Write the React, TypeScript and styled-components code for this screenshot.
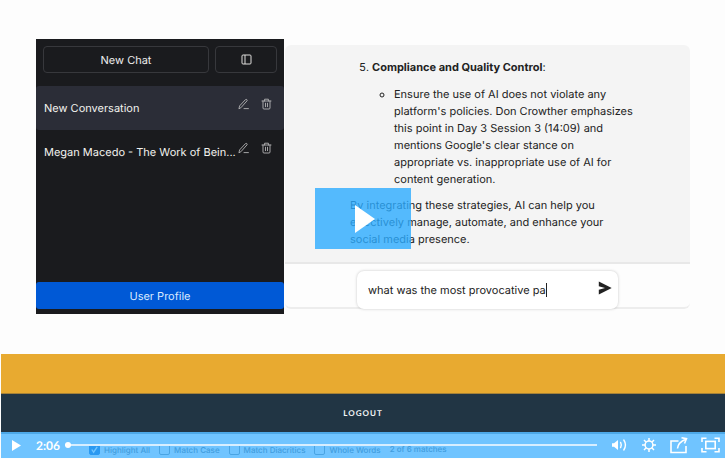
import React, { useState } from "react";
import styled, { createGlobalStyle } from "styled-components";

const GlobalStyle = createGlobalStyle`
  *, *::before, *::after { box-sizing: border-box; }
  body {
    margin: 0;
    background: #fdfdfd;
    font-family: Inter, "Liberation Sans", sans-serif;
    font-size: 11px;
    text-rendering: geometricPrecision;
    color: #222;
  }
  button, input { font: inherit; color: inherit; text-rendering: inherit; }
`;

const Player = styled.div`
  position: relative;
  padding: 0 0 1px 1px;
  background: #fdfdfd;
`;

const Page = styled.main`
  display: flex;
  align-items: flex-start;
  padding: 39px 35px 40px;
`;

const Sidebar = styled.aside`
  display: flex;
  flex-direction: column;
  flex: 0 0 248px;
  min-width: 0;
  height: 275px;
  padding-bottom: 5px;
  background: #1a1b1e;
  color: #ececec;
`;

const SidebarHeader = styled.div`
  display: flex;
  gap: 6px;
  padding: 7px 7px 13px;
`;

const OutlineButton = styled.button<{ $grow?: boolean }>`
  display: flex;
  align-items: center;
  justify-content: center;
  flex: ${(p) => (p.$grow ? "1" : "0 0 62px")};
  height: 27px;
  padding: 0;
  border: 1px solid #37383c;
  border-radius: 4px;
  background: transparent;
`;

const ConversationList = styled.ul`
  flex: 1;
  margin: 0;
  padding: 0;
  list-style: none;
`;

const Conversation = styled.li<{ $active?: boolean }>`
  display: flex;
  align-items: center;
  height: 44px;
  padding: 0 12px 0 8px;
  border-radius: 3px;
  background: ${(p) => (p.$active ? "#2b2d37" : "transparent")};
`;

const ConversationLink = styled.a`
  flex: 1;
  white-space: nowrap;
  color: #f2f2ee;
  text-decoration: none;
`;

const RowActions = styled.div`
  display: flex;
  align-items: center;
  gap: 12px;
  padding-bottom: 8px;
`;

const IconButton = styled.button`
  display: flex;
  padding: 0;
  border: 0;
  background: none;
  color: #b4b4b6;
`;

const ProfileButton = styled.button`
  height: 27px;
  border: 0;
  border-radius: 3px;
  background: #0059d6;
  color: #dcebff;
`;

const Chat = styled.section`
  display: flex;
  flex-direction: column;
  flex: 1;
  min-width: 0;
  margin: 6px 0 0 1px;
  border-bottom: 2px solid #ededed;
  border-radius: 6px;
`;

const Messages = styled.div`
  padding: 14px 10px 14px 20px;
  border-bottom: 2px solid #e8e8e8;
  border-radius: 6px 6px 0 0;
  background: #f4f4f4;
  line-height: 17px;
`;

const Message = styled.article`
  max-width: 285px;
  margin: 0 auto;
`;

const Points = styled.ol`
  margin: 0 0 9px;
  padding-left: 22px;
`;

const SubPoints = styled.ul`
  margin: 10px 0 0;
  padding-left: 22px;
  list-style: circle;
`;

const Paragraph = styled.p`
  margin: 0;
`;

const Composer = styled.form`
  display: flex;
  align-items: center;
  width: 261px;
  height: 38px;
  margin: 7px auto -2px;
  padding: 0 6px 0 11px;
  border-radius: 7px;
  background: #fff;
  box-shadow: 0 0 3px rgba(0, 0, 0, 0.22);
`;

const Prompt = styled.input`
  field-sizing: content;
  max-width: 215px;
  height: 14px;
  margin-right: auto;
  padding: 0;
  border: 0;
  border-right: 1px solid #222;
  outline: 0;
  background: none;
`;

const SendButton = styled(IconButton)`
  margin-bottom: 5px;
  color: #222;
`;

const GoldBand = styled.div`
  height: 40px;
  background: #e8aa30;
  border-bottom: 1px solid #a58138;
`;

const Footer = styled.footer`
  display: flex;
  align-items: center;
  justify-content: center;
  height: 38px;
  background: #213544;
`;

const FooterLink = styled.a`
  color: #f4f6f8;
  font-family: Lato, sans-serif;
  font-size: 8px;
  font-weight: 700;
  letter-spacing: 1px;
  text-decoration: none;
`;

const FindBar = styled.div`
  display: flex;
  align-items: flex-end;
  gap: 9px;
  height: 26px;
  padding: 0 0 3px 88px;
  border-top: 2px solid #8aa0b0;
  background: #fdfdfd;
  color: #657c8c;
  font-size: 8px;
  font-weight: 500;
`;

const FindOption = styled.label`
  display: flex;
  align-items: center;
  gap: 4px;
  white-space: nowrap;
`;

const FindCheck = styled.input`
  appearance: none;
  width: 11px;
  height: 11px;
  margin: 0;
  border: 1px solid #7f93a2;
  border-radius: 2px;
  &:checked {
    border-color: #1470d0;
    background: #1470d0 url("data:image/svg+xml,%3Csvg xmlns='http://www.w3.org/2000/svg' viewBox='0 0 10 10'%3E%3Cpath d='M2 5l2 3 4-6' fill='none' stroke='white' stroke-width='1.5'/%3E%3C/svg%3E");
  }
`;

const FindCount = styled.span`
  line-height: 11px;
`;

const PlayLayer = styled.div`
  position: absolute;
  inset: 0 0 22px;
  display: grid;
  place-items: center;
  pointer-events: none;
`;

const BigPlay = styled.button`
  display: grid;
  place-items: center;
  width: 96px;
  height: 61px;
  padding: 0 0 0 5px;
  border: 0;
  background: rgba(44, 171, 255, 0.8);
  pointer-events: auto;
`;

const Controls = styled.div`
  position: absolute;
  inset: auto 0 1px 1px;
  display: flex;
  align-items: center;
  height: 26px;
  padding: 0 5px 0 11px;
  background: rgba(51, 171, 255, 0.7);
  color: #fff;
`;

const ControlButton = styled(IconButton)`
  color: #fff;
`;

const Time = styled.time`
  margin: 0 5px 0 15px;
  font-family: Lato, sans-serif;
  font-size: 12px;
  font-weight: 700;
`;

const Seek = styled.input`
  appearance: none;
  flex: 1;
  min-width: 0;
  height: 6px;
  margin: 0 14px 0 0;
  background: linear-gradient(#d7eeff, #d7eeff) center / 100% 2px no-repeat;
  &::-webkit-slider-thumb {
    appearance: none;
    width: 6px;
    height: 6px;
    border-radius: 50%;
    background: #fff;
  }
`;

const ControlGroup = styled.div`
  display: flex;
  align-items: center;
  gap: 13px;
`;

const PanelIcon = () => (
  <svg width="11" height="11" viewBox="0 0 11 11" fill="none" stroke="#dededb">
    <rect x="1" y="1" width="9" height="9" rx="1" />
    <path d="M4 1v9" />
  </svg>
);

const PencilIcon = () => (
  <svg width="11" height="12" viewBox="0 0 11 12" fill="none" stroke="currentColor" strokeWidth=".9" strokeLinejoin="round" strokeLinecap="round">
    <path d="M1 10.4l.6-2.5 5.8-6.2c.4-.5 1-.5 1.4-.1.5.4.5 1 .1 1.4L3.1 9.5z M6 10.6h4.4" />
  </svg>
);

const TrashIcon = () => (
  <svg width="11" height="12" viewBox="0 0 11 12" fill="none" stroke="currentColor" strokeWidth=".9" strokeLinejoin="round" strokeLinecap="round">
    <path d="M1 3h9 M3.6 3V1.2h3.8V3 M2 3v7q0 1 1 1h5q1 0 1-1V3 M4.5 5.2v3.5 M6.5 5.2v3.5" />
  </svg>
);

const SendIcon = () => (
  <svg width="14" height="14" viewBox="0 0 14 14" fill="currentColor">
    <path d="M.8.4L13.7 7 .8 13.6V8.7L7 7 .8 5.3z" />
  </svg>
);

const TriangleIcon = ({ width, height }: { width: number; height: number }) => (
  <svg width={width} height={height} viewBox="0 0 20 28" preserveAspectRatio="none" fill="#fff">
    <path d="M0 0l20 14L0 28z" />
  </svg>
);

const VolumeIcon = () => (
  <svg width="17" height="14" viewBox="0 0 17 14" fill="none" stroke="currentColor" strokeWidth="1.4" strokeLinecap="round">
    <path d="M1 5.2h2L7 2v10L3 8.8H1z" fill="currentColor" stroke="none" />
    <path d="M9.6 4.4q1.4 2.6 0 5.2 M12.8 2q3.3 5 0 10" />
  </svg>
);

const GearIcon = () => (
  <svg width="16" height="16" viewBox="0 0 16 16" fill="none" stroke="currentColor" strokeWidth="1.5">
    <circle cx="8" cy="8" r="3.9" />
    <path d="M8 1v3 M8 12v3 M1 8h3 M12 8h3 M3 3l2.2 2.2 M10.8 10.8L13 13 M13 3l-2.2 2.2 M5.2 10.8L3 13" />
  </svg>
);

const ShareIcon = () => (
  <svg width="18" height="18" viewBox="0 0 18 18" fill="none" stroke="currentColor" strokeWidth="1.6">
    <path d="M8.5 5H1v11.5h15V10" />
    <path d="M7.5 12.5q.5-6 8-9.3 M11.5 1.7l5 1-2 4.8" />
  </svg>
);

const FullscreenIcon = () => (
  <svg width="19" height="16" viewBox="0 0 19 16" fill="none" stroke="currentColor" strokeWidth="1.6">
    <path d="M1 5V1.2h4.5 M13.5 1.2H18V5 M18 11v3.8h-4.5 M5.5 14.8H1V11" />
    <rect x="4.8" y="4.4" width="9.4" height="7.2" />
  </svg>
);

const conversations = ["New Conversation", "Megan Macedo - The Work of Bein..."];
const findOptions = ["Highlight All", "Match Case", "Match Diacritics", "Whole Words"];

export default function App() {
  const [prompt, setPrompt] = useState("what was the most provocative pa");

  return (
    <>
      <GlobalStyle />
      <Player>
        <Page>
          <Sidebar>
            <SidebarHeader>
              <OutlineButton $grow>New Chat</OutlineButton>
              <OutlineButton aria-label="Toggle sidebar"><PanelIcon /></OutlineButton>
            </SidebarHeader>
            <ConversationList>
              {conversations.map((title, i) => (
                <Conversation key={title} $active={i === 0}>
                  <ConversationLink href="#">{title}</ConversationLink>
                  <RowActions>
                    <IconButton aria-label="Rename"><PencilIcon /></IconButton>
                    <IconButton aria-label="Delete"><TrashIcon /></IconButton>
                  </RowActions>
                </Conversation>
              ))}
            </ConversationList>
            <ProfileButton>User Profile</ProfileButton>
          </Sidebar>

          <Chat>
            <Messages>
              <Message>
                <Points start={5}>
                  <li>
                    <strong>Compliance and Quality Control</strong>:
                    <SubPoints>
                      <li>
                        Ensure the use of AI does not violate any platform's policies. Don Crowther
                        emphasizes this point in Day 3 Session 3 (14:09) and mentions Google's clear
                        stance on appropriate vs. inappropriate use of AI for content generation.
                      </li>
                    </SubPoints>
                  </li>
                </Points>
                <Paragraph>
                  By integrating these strategies, AI can help you effectively manage, automate, and
                  enhance your social media presence.
                </Paragraph>
              </Message>
            </Messages>
            <Composer onSubmit={(e) => e.preventDefault()}>
              <Prompt aria-label="Message" value={prompt} onChange={(e) => setPrompt(e.target.value)} />
              <SendButton aria-label="Send"><SendIcon /></SendButton>
            </Composer>
          </Chat>
        </Page>

        <GoldBand />
        <Footer><FooterLink href="#">LOGOUT</FooterLink></Footer>
        <FindBar>
          {findOptions.map((label, i) => (
            <FindOption key={label}>
              <FindCheck type="checkbox" defaultChecked={i === 0} />
              {label}
            </FindOption>
          ))}
          <FindCount>2 of 6 matches</FindCount>
        </FindBar>

        <PlayLayer>
          <BigPlay aria-label="Play video"><TriangleIcon width={20} height={28} /></BigPlay>
        </PlayLayer>
        <Controls>
          <ControlButton aria-label="Play"><TriangleIcon width={9} height={11} /></ControlButton>
          <Time>2:06</Time>
          <Seek type="range" aria-label="Seek" min={0} max={100} defaultValue={0} />
          <ControlGroup>
            <ControlButton aria-label="Volume"><VolumeIcon /></ControlButton>
            <ControlButton aria-label="Settings"><GearIcon /></ControlButton>
            <ControlButton aria-label="Share"><ShareIcon /></ControlButton>
            <ControlButton aria-label="Fullscreen"><FullscreenIcon /></ControlButton>
          </ControlGroup>
        </Controls>
      </Player>
    </>
  );
}
